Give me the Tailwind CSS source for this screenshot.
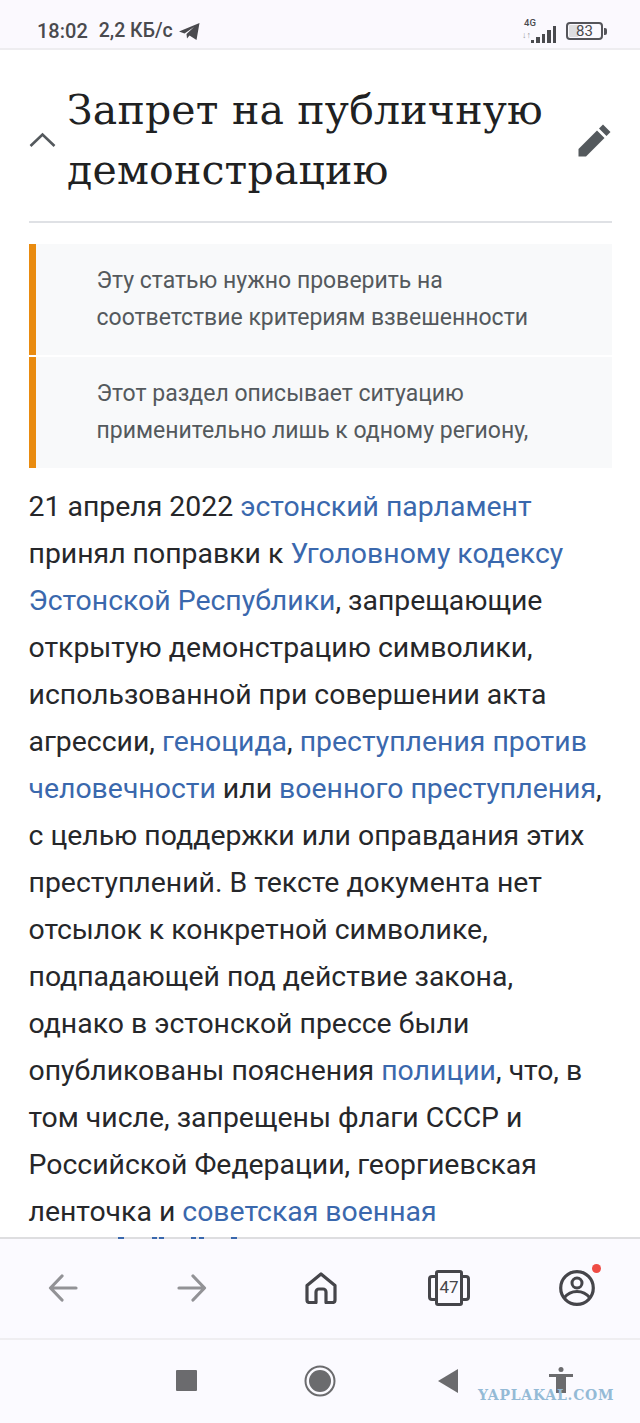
<!DOCTYPE html>
<html lang="en">
<head>
<meta charset="UTF-8">
<title>Запрет на публичную демонстрацию</title>
<script src="https://cdn.jsdelivr.net/npm/@tailwindcss/browser@4"></script>
</head>
<body class="bg-white">
<div class="h-[1423px] flex flex-col overflow-hidden font-['Roboto',sans-serif]">

  <!-- status bar -->
  <div class="h-[50px] shrink-0 bg-[#fbf9fe] border-b-2 border-[#eeedf0] flex items-center pt-[14px] pl-[37px] pr-[33px] text-[#4a4a4e]">
    <span class="text-[20px] font-medium">18:02</span>
    <span class="text-[19.5px] font-medium ml-[11px]">2,2 КБ/с</span>
    <svg class="ml-[6px] w-[21px] h-[19px]" viewBox="0 0 21 19"><path d="M0 9.500 20.500 1 17.500 18 10.500 13.500 8 16.500 7.500 12 15 5 5.500 11.500z" fill="#4a4a4e"/></svg>
    <div class="ml-auto flex items-center">
      <div class="relative w-[34px] h-[24px]">
        <span class="absolute left-[2px] top-[-3px] text-[9.500px] font-medium">4G</span>
        <span class="absolute left-[0px] top-[10px] text-[9px] text-[#9a9a9e]">↓↑</span>
        <div class="absolute right-0 bottom-0 flex items-end gap-[2px]">
          <i class="block w-[3.500px] h-[3px] bg-[#4a4a4e]"></i>
          <i class="block w-[3.500px] h-[6px] bg-[#4a4a4e]"></i>
          <i class="block w-[3.500px] h-[9px] bg-[#4a4a4e]"></i>
          <i class="block w-[3.500px] h-[13px] bg-[#4a4a4e]"></i>
          <i class="block w-[3.500px] h-[17px] bg-[#4a4a4e]"></i>
        </div>
      </div>
      <div class="ml-[10px] w-[37px] h-[18px] rounded-[4px] border-2 border-[#55555a] flex items-center justify-center text-[15px] leading-none bg-[linear-gradient(90deg,#dedee0_0,#dedee0_30%,transparent_30%)] bg-clip-content p-[1px]">83</div>
      <div class="w-[3px] h-[7px] ml-[1px] rounded-r-[2px] bg-[#55555a]"></div>
    </div>
  </div>

  <main class="flex-1 overflow-hidden px-[28.500px]">
    <!-- section heading -->
    <div class="flex items-center h-[173px] border-b-2 border-[#dfe1e5]">
      <svg class="w-[27px] h-[16px] shrink-0 mt-[8px]" viewBox="0 0 27 16"><path d="M1.500 14 13.500 2.500 25.500 14" fill="none" stroke="#54595d" stroke-width="2.600"/></svg>
      <h2 class="ml-[11.500px] flex-1 font-['DejaVu_Serif',serif] text-[#202122] text-[41px] leading-[60px] tracking-[0.2px] mt-[8px]">Запрет на публичную демонстрацию</h2>
      <svg class="w-[33px] h-[33px] shrink-0 mr-[1px] mt-[9px]" viewBox="0 0 33 33"><path d="M0.500 32.500V25L19 6.500 26.500 14 8 32.500z M21 4.500 25 .5 32.500 8 28.500 12z" fill="#54595d"/></svg>
    </div>

    <!-- notices -->
    <div class="mt-[21px] h-[111px] bg-[#f8f9fa] border-l-[7px] border-[#e98b0f] pl-[61px] pt-[17.500px] text-[23px] leading-[37.500px] text-[#54595d]">
      <p>Эту статью нужно проверить на</p>
      <p>соответствие критериям взвешенности</p>
    </div>
    <div class="mt-[2px] h-[111px] bg-[#f8f9fa] border-l-[7px] border-[#e98b0f] pl-[61px] pt-[17.500px] text-[23px] leading-[37.500px] text-[#54595d]">
      <p>Этот раздел описывает ситуацию</p>
      <p>применительно лишь к одному региону,</p>
    </div>

    <!-- article text -->
    <p class="mt-[15px] text-[28.400px] leading-[47px] whitespace-nowrap text-[#26272a]">21 апреля 2022 <a class="text-[#3a68ad]">эстонский парламент</a><br>принял поправки к <a class="text-[#3a68ad]">Уголовному кодексу</a><br><a class="text-[#3a68ad]">Эстонской Республики</a>, запрещающие<br>открытую демонстрацию символики,<br>использованной при совершении акта<br>агрессии, <a class="text-[#3a68ad]">геноцида</a>, <a class="text-[#3a68ad]">преступления против</a><br><a class="text-[#3a68ad]">человечности</a> или <a class="text-[#3a68ad]">военного преступления</a>,<br>с целью поддержки или оправдания этих<br>преступлений. В тексте документа нет<br>отсылок к конкретной символике,<br>подпадающей под действие закона,<br>однако в эстонской прессе были<br>опубликованы пояснения <a class="text-[#3a68ad]">полиции</a>, что, в<br>том числе, запрещены флаги СССР и<br>Российской Федерации, георгиевская<br>ленточка и <a class="text-[#3a68ad]">советская военная</a></p>
  </main>

  <!-- browser toolbar -->
  <div class="relative h-[101px] shrink-0 bg-[#fbfaff] border-t-2 border-[#dedee0] flex items-center pl-[48px] pb-[2px]">
    <!-- cut-off tops of the next line of text, peeking over the toolbar edge -->
    <span class="absolute left-[118px] -top-[2px] w-[6px] h-[2px] bg-[#3a68ad]"></span>
    <span class="absolute left-[152px] -top-[2px] w-[5px] h-[2px] bg-[#3a68ad]"></span>
    <span class="absolute left-[159px] -top-[2px] w-[5px] h-[2px] bg-[#3a68ad]"></span>
    <span class="absolute left-[191px] -top-[2px] w-[5px] h-[2px] bg-[#3a68ad]"></span>
    <span class="absolute left-[199px] -top-[2px] w-[5px] h-[2px] bg-[#3a68ad]"></span>
    <span class="absolute left-[231px] -top-[2px] w-[6px] h-[2px] bg-[#3a68ad]"></span>
    <svg class="w-[30px] h-[28px] shrink-0" viewBox="0 0 30 28"><path d="M28 14H3M14 2 2.500 14 14 26" fill="none" stroke="#929296" stroke-width="3.200" stroke-linecap="round" stroke-linejoin="round"/></svg>
    <svg class="ml-[99px] w-[30px] h-[28px] shrink-0" viewBox="0 0 30 28"><path d="M2 14H27M16 2 27.500 14 16 26" fill="none" stroke="#929296" stroke-width="3.200" stroke-linecap="round" stroke-linejoin="round"/></svg>
    <svg class="ml-[98px] w-[32px] h-[32px] shrink-0" viewBox="0 0 32 32"><path d="M2 13.500 16 2 30 13.500V28a2.500 2.500 0 0 1-2.500 2.500H21V20a3 3 0 0 0-3-3h-4a3 3 0 0 0-3 3v10.500H4.500A2.500 2.500 0 0 1 2 28z" fill="none" stroke="#45454a" stroke-width="3.200" stroke-linejoin="round"/></svg>
    <div class="ml-[91px] relative w-[42px] h-[36px] shrink-0 flex items-center justify-center">
      <div class="absolute left-0 top-[5px] w-[42px] h-[26px] border-[3px] border-[#45454a] rounded-[4px]"></div>
      <div class="relative w-[28px] h-[36px] bg-[#fbfaff] border-[3px] border-[#45454a] rounded-[3px] flex items-center justify-center text-[17px] text-[#45454a]">47</div>
    </div>
    <div class="ml-[89px] relative w-[36px] h-[36px] shrink-0">
      <svg class="w-[36px] h-[36px]" viewBox="0 0 36 36"><circle cx="18" cy="18" r="16.300" fill="none" stroke="#45454a" stroke-width="3.200"/><circle cx="18" cy="13" r="5" fill="none" stroke="#45454a" stroke-width="3"/><path d="M5 28c4-5 8-6.500 13-6.500s9 1.500 13 6.500" fill="none" stroke="#45454a" stroke-width="3"/></svg>
      <span class="absolute -top-[6px] right-[-6px] w-[9px] h-[9px] rounded-full bg-[#ef4c45]"></span>
    </div>
  </div>

  <!-- android nav -->
  <div class="relative h-[85px] shrink-0 bg-[#fbfaff] border-t-2 border-[#efeef1] flex items-center pl-[176px] pb-[2px]">
    <div class="w-[21px] h-[21px] bg-[#6b6b6e] rounded-[1px]"></div>
    <svg class="ml-[107px] w-[32px] h-[32px]" viewBox="0 0 32 32"><circle cx="16" cy="16" r="14.500" fill="none" stroke="#6b6b6e" stroke-width="2"/><circle cx="16" cy="16" r="11" fill="#6b6b6e"/></svg>
    <svg class="ml-[102px] w-[21px] h-[24px]" viewBox="0 0 21 24"><path d="M0 12 20 0V24z" fill="#6b6b6e"/></svg>
    <svg class="ml-[90px] w-[24px] h-[28px]" viewBox="0 0 24 28"><circle cx="12" cy="2.500" r="2.500" fill="#6b6b6e"/><path d="M0 7H24V10H17V26H7V10H0z" fill="#6b6b6e"/></svg>
    <span class="absolute left-[478px] top-[48px] font-['DejaVu_Serif',serif] font-bold text-[14px] leading-none tracking-[0.750px] text-[#94bad6]">YAPLAKAL.COM</span>
  </div>
</div>
</body>
</html>
